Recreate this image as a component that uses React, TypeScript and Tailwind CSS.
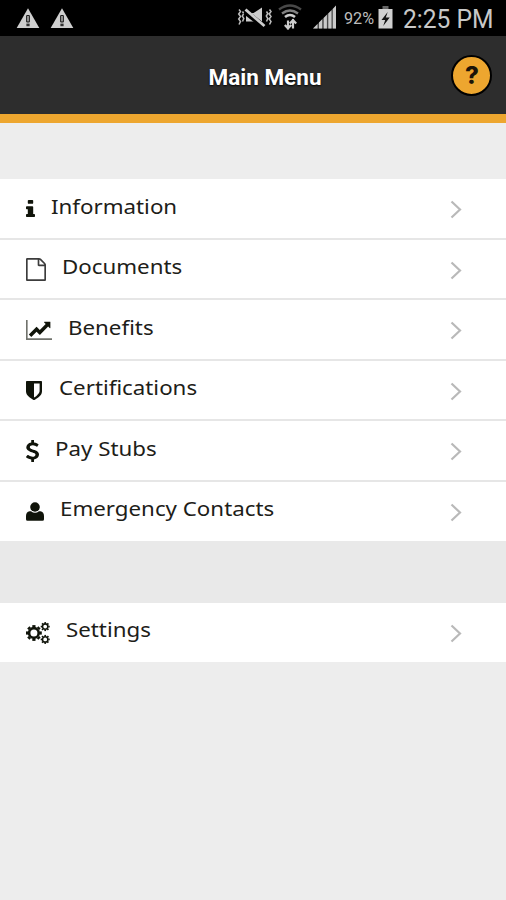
import React from "react";

type IconProps = { className?: string };

const InfoIcon = ({ className }: IconProps) => (
  <svg className={className} viewBox="0 128 640 1408" preserveAspectRatio="none" fill="currentColor">
    <path d="M640 1344v128q0 26-19 45t-45 19h-512q-26 0-45-19t-19-45v-128q0-26 19-45t45-19h64v-384h-64q-26 0-45-19t-19-45v-128q0-26 19-45t45-19h384q26 0 45 19t19 45v576h64q26 0 45 19t19 45zM512 192v192q0 26-19 45t-45 19h-256q-26 0-45-19t-19-45v-192q0-26 19-45t45-19h256q26 0 45 19t19 45z" />
  </svg>
);

const FileIcon = ({ className }: IconProps) => (
  <svg className={className} viewBox="128 0 1536 1792" preserveAspectRatio="none" fill="currentColor">
    <path d="M1596 380q28 28 48 76t20 88v1152q0 40-28 68t-68 28h-1344q-40 0-68-28t-28-68v-1600q0-40 28-68t68-28h896q40 0 88 20t76 48zm-444-244v376h376q-10-29-22-41l-313-313q-12-12-41-22zm384 1528v-1024h-416q-40 0-68-28t-28-68v-416h-768v1536h1280z" />
  </svg>
);

const ChartIcon = ({ className }: IconProps) => (
  <svg className={className} viewBox="0 128 2048 1536" preserveAspectRatio="none" fill="currentColor">
    <path opacity=".6" d="M2048 1536v128h-2048v-1536h128v1408h1920z" />
    <path d="M1920 288v435q0 21-19.5 29.5t-35.5-7.5l-121-121-633 633q-10 10-23 10t-23-10l-233-233-416 416-192-192 585-585q10-10 23-10t23 10l233 233 464-464-121-121q-16-16-7.5-35.5t29.5-19.5h435q14 0 23 9t9 23z" />
  </svg>
);

const ShieldIcon = ({ className }: IconProps) => (
  <svg className={className} viewBox="256 128 1280 1536" preserveAspectRatio="none" fill="currentColor">
    <path d="M1344 960v-640h-448v1137q119-63 213-137 235-184 235-360zm192-768v768q0 86-33.5 170.5t-83 150-118 127.5-126.5 103-121 77.5-89.5 49.5-42.5 20q-12 6-26 6t-26-6q-16-7-42.5-20t-89.5-49.5-121-77.5-126.5-103-118-127.5-83-150-33.5-170.5v-768q0-26 19-45t45-19h1152q26 0 45 19t19 45z" />
  </svg>
);

const DollarIcon = ({ className }: IconProps) => (
  <svg className={className} viewBox="430 0 932 1792" preserveAspectRatio="none" fill="currentColor">
    <path d="M1362 1185q0 153-99.5 263.5t-258.5 136.5v175q0 14-9 23t-23 9h-135q-13 0-22.5-9.5t-9.5-22.5v-175q-66-9-127.5-31t-101.5-44.5-74-48-46.5-37.5-17.5-18q-17-21-2-41l103-135q7-10 23-12 15-2 24 9l2 2q113 99 243 125 37 8 74 8 81 0 142.5-43t61.5-122q0-28-15-53t-33.5-42-58.5-37.5-66-32-80-32.5q-39-16-61.5-25t-61.5-26.5-62.5-31-56.5-35.5-53.5-42.5-43.5-49-35.5-58-21-66.5-8.5-78q0-138 98-242t255-134v-180q0-13 9.5-22.5t22.5-9.5h135q14 0 23 9t9 23v176q57 6 110.5 23t87 33.5 63.5 37.5 39 29 15 14q17 18 5 38l-81 146q-8 15-23 16-14 3-27-7-3-3-14.5-12t-39-26.5-58.5-32-74.5-26-85.5-11.5q-95 0-155 43t-60 111q0 26 8.5 48t29.5 41.5 39.5 33 56 31 60.5 27 70 27.5q53 20 81 31.5t76 35 75.5 42.5 62 50 53 63.5 31.5 76.5 13 94z" />
  </svg>
);

// Round head over squared shoulders.
const UserIcon = ({ className }: IconProps) => (
  <svg className={className} viewBox="0 0 18 19" fill="currentColor">
    <ellipse cx="9" cy="5" rx="4.800" ry="4.700" />
    <path d="M3.600 9.200H5Q9 12.200 13 9.200h1.400q3.600.6 3.600 4.800v3.200q0 1.500-1.500 1.500h-15Q0 18.700 0 17.200V14q0-4.200 3.600-4.800z" />
  </svg>
);

// Ring with eight square teeth, centred on (cx, cy).
const Gear = ({ cx, cy, r, hole, tooth }: { cx: number; cy: number; r: number; hole: number; tooth: number }) => {
  const body = r * 0.78;
  return (
    <g transform={`translate(${cx} ${cy})`}>
      <circle r={(body + hole) / 2} fill="none" stroke="currentColor" strokeWidth={body - hole} />
      {[0, 45, 90, 135, 180, 225, 270, 315].map((a) => (
        <rect key={a} x={-tooth / 2} y={-r} width={tooth} height={r - body + 0.4} transform={`rotate(${a})`} fill="currentColor" />
      ))}
    </g>
  );
};

const CogsIcon = ({ className }: IconProps) => (
  <svg className={className} viewBox="0 0 24 22">
    <Gear cx={7.9} cy={11} r={7.9} hole={3.5} tooth={3.2} />
    <Gear cx={19.2} cy={4.6} r={4.5} hole={1.9} tooth={1.7} />
    <Gear cx={19.2} cy={17.4} r={4.5} hole={1.9} tooth={1.7} />
  </svg>
);

const Warning = () => (
  <svg className="h-[21px] w-[24px]" viewBox="0 0 24 21">
    <path d="M12 .3 23.300 20H.7z" fill="#cfcfcf" />
    <rect x="10.100" y="7" width="3.800" height="7.600" rx="1" fill="#1c1c1c" />
    <rect x="11.200" y="8" width="1.600" height="5.400" fill="#aaa" />
    <rect x="10.400" y="15.600" width="3.200" height="2.600" fill="#333" />
  </svg>
);

const StatusBar = () => (
  <div className="flex h-9 items-start bg-black pl-4">
    <div className="flex gap-[10px] pt-2">
      <Warning />
      <Warning />
    </div>
    <svg className="ml-auto h-9 w-[102px] shrink-0" viewBox="0 0 102 36" fill="none">
      <g stroke="#bdbdbd" strokeWidth="1.500">
        <path d="M2 9.500 3.500 11.500 1.700 14 3.500 16.500 1.700 19 3.500 21.500 2 24.500M5.500 11.500 6.800 13.500 5.300 16 6.800 18.500 5.500 21.500" />
        <path d="M32.500 9.500 34 11.500 32.200 14 34 16.500 32.200 19 34 21.500 32.500 24.500M29.500 11.500 30.800 13.500 29.300 16 30.800 18.500 29.500 21.500" />
      </g>
      <path d="M9 13h7.500l8.500-5.500v18.500l-8.500-4.500H9z" fill="#cdcdcd" />
      <path d="m8 11.500 19.500 15.500" stroke="#000" strokeWidth="5.500" />
      <path d="m8.500 9.500 19 16.500" stroke="#cdcdcd" strokeWidth="2.800" />
      <path d="M42 9.500q11-8 22 0" stroke="#484848" strokeWidth="2.400" />
      <path d="M45 13.500q8-6 16 0" stroke="#808080" strokeWidth="2.400" />
      <path d="M48 17q5-4 10 0" stroke="#ccc" strokeWidth="2.600" />
      <path d="M51 29.500v-9m-3.200 4.500 3.200 3.300 3.200-3.300M56 19v9.500m-3.200-5 3.200-3.300 3.200 3.300" stroke="#ccc" strokeWidth="2.200" />
      <path d="M76 28.500 99 5.500v23z" fill="#4a4a4a" />
      <path d="M76 28.500l4.500-4.500v4.500zM82 28.500v-6l3.200-3.200v9.200zM86.700 28.500v-10.500l3.200-3.200v13.700zM91.300 28.500V13.500l3.200-3.200v18.200zM95.800 28.500V9l3.200-3.500v23z" fill="#cacaca" />
    </svg>
    <span className="ml-[5px] w-[31px] whitespace-nowrap pt-[8px] font-[Roboto] text-[16.500px] leading-[22px] text-[#bdbdbd]">
      <span className="inline-block origin-left scale-x-[.98]">92%</span>
    </span>
    <svg className="ml-[3px] mt-[6px] h-[23px] w-[15px] shrink-0" viewBox="0 0 15 23">
      <path d="M4.500 0h6v3h-6z" fill="#666" />
      <path d="M.5 3h14v19.500H.5z" fill="#d0d0d0" />
      <path d="M9.700 6 3.500 14h3.700l-2 6 6.500-8.500H7.800z" fill="#111" />
    </svg>
    <span className="ml-[10px] w-[103px] whitespace-nowrap pt-[4px] font-[Roboto] text-[25.500px] leading-[30px] text-[#c8c8c8]">
      <span className="inline-block origin-left scale-x-[.965]">2:25 PM</span>
    </span>
  </div>
);

type Item = { label: string; icon: React.ReactNode; text: string; row: string };

const items: Item[] = [
  { label: "Information", icon: <InfoIcon className="mt-[21px] h-[17px] w-[9px]" />, text: "ml-[16px] pt-[13px]", row: "h-[61px]" },
  { label: "Documents", icon: <FileIcon className="mt-[18px] h-[23px] w-[20px] text-[#3c3c3c]" />, text: "ml-[16px] pt-[12px]", row: "h-[60px]" },
  { label: "Benefits", icon: <ChartIcon className="mt-[20px] h-[20px] w-[26px]" />, text: "ml-[16px] pt-[13px]", row: "h-[61px]" },
  { label: "Certifications", icon: <ShieldIcon className="mt-[20px] h-[19px] w-[16px]" />, text: "ml-[17px] pt-[12px]", row: "h-[60px]" },
  { label: "Pay Stubs", icon: <DollarIcon className="mt-[19px] h-[22px] w-[13px]" />, text: "ml-[16px] pt-[13px]", row: "h-[61px]" },
  { label: "Emergency Contacts", icon: <UserIcon className="mt-[20px] h-[19px] w-[18px]" />, text: "ml-[16px] pt-[12px]", row: "h-[59px]" },
];

const settings: Item = {
  label: "Settings",
  icon: <CogsIcon className="mt-[19px] h-[22px] w-[24px]" />,
  text: "ml-[16px] pt-[12px]",
  row: "h-[59px]",
};

const MenuRow = ({ item, border }: { item: Item; border: boolean }) => (
  <div className={`flex items-start bg-white pl-[25.500px] pr-[44.500px] text-[#10140a] ${item.row} ${border ? "border-b-2 border-[#e6e6e6]" : ""}`}>
    <span className="shrink-0">{item.icon}</span>
    <span className={`font-['Noto_Sans'] text-[20px] leading-[30px] whitespace-nowrap text-[#1d2018] ${item.text}`}>
      <span className="inline-block origin-left scale-x-[1.115]">{item.label}</span>
    </span>
    <svg className="ml-auto mt-[21px] h-[19px] w-[12px] shrink-0" viewBox="0 0 12 19" fill="none">
      <path d="m1.500 1.500 8.500 8-8.500 8" stroke="#b9b9b9" strokeWidth="2.200" />
    </svg>
  </div>
);

export default function App() {
  return (
    <div className="flex h-[900px] w-[506px] flex-col overflow-hidden bg-[#ededed]">
      <StatusBar />
      <header className="grid h-[87px] shrink-0 grid-cols-[1fr_auto_1fr] border-b-[9px] border-[#eda62f] bg-[#2d2d2d]">
        <h1 className="col-start-2 pl-6 pt-[26px] font-[Roboto] text-[22.500px] leading-[30px] font-bold text-white [text-shadow:0_1px_2px_#000]">
          Main Menu
        </h1>
        <div className="mr-[14px] mt-[19px] flex h-[41px] w-[41px] items-center justify-center justify-self-end rounded-full border-2 border-black bg-[#eda62f] pl-px font-[Inter] text-[24px] font-extrabold text-[#1b1408]">
          ?
        </div>
      </header>
      <nav className="flex flex-col pt-[56px]">
        <div className="flex flex-col">
          {items.map((item, i) => (
            <MenuRow key={item.label} item={item} border={i < items.length - 1} />
          ))}
        </div>
        <div className="h-[62px] bg-[#e9e9e9]" />
        <MenuRow item={settings} border={false} />
      </nav>
    </div>
  );
}
